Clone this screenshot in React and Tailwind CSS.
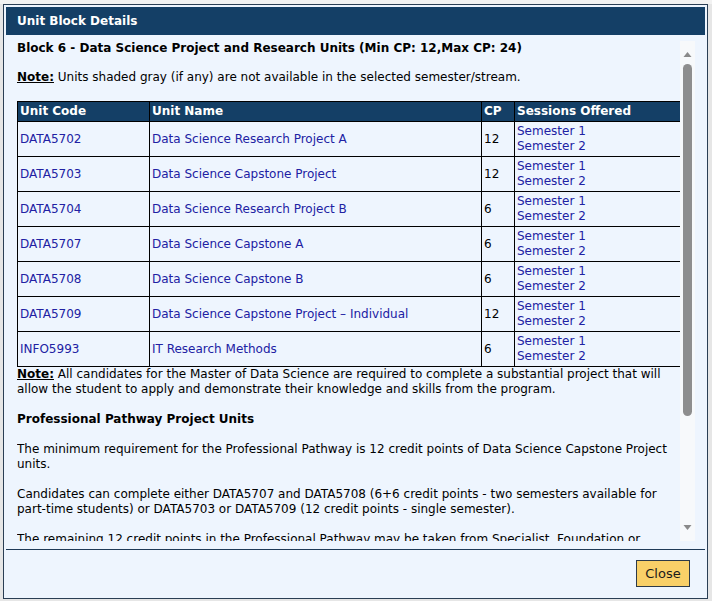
import React from 'react';

const units = [
  { code: 'DATA5702', name: 'Data Science Research Project A', cp: 12 },
  { code: 'DATA5703', name: 'Data Science Capstone Project', cp: 12 },
  { code: 'DATA5704', name: 'Data Science Research Project B', cp: 6 },
  { code: 'DATA5707', name: 'Data Science Capstone A', cp: 6 },
  { code: 'DATA5708', name: 'Data Science Capstone B', cp: 6 },
  { code: 'DATA5709', name: 'Data Science Capstone Project – Individual', cp: 12 },
  { code: 'INFO5993', name: 'IT Research Methods', cp: 6 },
];

// Fake classic scrollbar on the right of the scroll panel
const ScrollBar = () => (
  <div className="w-[15px] h-full bg-[#f7f9fb] flex flex-col items-center">
    <svg width="15" height="22" viewBox="0 0 15 22" className="shrink-0">
      <polygon points="3.5,16 11.5,16 7.5,11" fill="#8a8a8a" />
    </svg>
    <div className="w-[9px] h-[352px] mt-[1px] rounded-full bg-[#8e8e8e]" />
    <div className="flex-1" />
    <svg width="15" height="22" viewBox="0 0 15 22" className="shrink-0">
      <polygon points="3.5,6 11.5,6 7.5,11" fill="#8a8a8a" />
    </svg>
  </div>
);

const Note = () => <span className="font-bold underline">Note:</span>;

export default function App() {
  return (
    <div className="w-[712px] h-[601px] bg-[#e6e6e6] font-['DejaVu_Sans',sans-serif] text-[12px] leading-[15px] text-black overflow-hidden">
      <div className="h-[4px] bg-[#f2f2f2]" />
      <div className="ml-[3px] w-[705px] h-[595px] border border-[#2a3e54] bg-[#eef5fe] p-[2px] flex flex-col">
        {/* title bar */}
        <div className="h-[28px] bg-[#143f66] text-white font-bold flex items-center pl-[11px] pt-[1px]">
          Unit Block Details
        </div>

        {/* content */}
        <div className="pl-[11px] pr-[10px] pt-[6px] pb-[8px] border-b border-[#1f3a57]">
          <div className="h-[500px] flex">
            <div className="w-[664px] h-full overflow-hidden">
              <p className="font-bold mb-[14px]">
                Block 6 - Data Science Project and Research Units (Min CP: 12,Max CP: 24)
              </p>
              <p className="mb-[16px]">
                <Note /> Units shaded gray (if any) are not available in the selected semester/stream.
              </p>

              <table className="w-[664px] table-fixed border-collapse border border-black">
                <colgroup>
                  <col className="w-[132px]" />
                  <col className="w-[332px]" />
                  <col className="w-[33px]" />
                  <col className="w-[167px]" />
                </colgroup>
                <thead>
                  <tr className="bg-[#143f66] text-white font-bold text-left">
                    <th className="border border-black px-[2px] py-[2px] text-left">Unit Code</th>
                    <th className="border border-black px-[2px] py-[2px] text-left">Unit Name</th>
                    <th className="border border-black px-[2px] py-[2px] text-left">CP</th>
                    <th className="border border-black px-[2px] py-[2px] text-left">Sessions Offered</th>
                  </tr>
                </thead>
                <tbody>
                  {units.map((u) => (
                    <tr key={u.code}>
                      <td className="border border-black px-[2px] py-[2px] text-[#2121a3]">{u.code}</td>
                      <td className="border border-black px-[2px] py-[2px] text-[#2121a3]">{u.name}</td>
                      <td className="border border-black px-[2px] py-[2px]">{u.cp}</td>
                      <td className="border border-black px-[2px] py-[2px] text-[#2121a3]">
                        <div>Semester 1</div>
                        <div>Semester 2</div>
                      </td>
                    </tr>
                  ))}
                </tbody>
              </table>

              <p className="mb-[15px]">
                <Note /> All candidates for the Master of Data Science are required to complete a substantial project that will allow the student to apply and demonstrate their knowledge and skills from the program.
              </p>
              <p className="font-bold mb-[15px]">Professional Pathway Project Units</p>
              <p className="mb-[15px]">
                The minimum requirement for the Professional Pathway is 12 credit points of Data Science Capstone Project units.
              </p>
              <p className="mb-[15px]">
                Candidates can complete either DATA5707 and DATA5708 (6+6 credit points - two semesters available for part-time students) or DATA5703 or DATA5709 (12 credit points - single semester).
              </p>
              <p className="mb-[15px]">
                The remaining 12 credit points in the Professional Pathway may be taken from Specialist, Foundation or Elective units.
              </p>
            </div>
            <ScrollBar />
          </div>
        </div>

        {/* footer */}
        <div className="flex-1 flex items-center justify-end pr-[15px]">
          <button className="w-[54px] h-[27px] bg-[#f9d068] border border-[#2d3a48] text-[13px] text-[#1a1a1a]">
            Close
          </button>
        </div>
      </div>
    </div>
  );
}
